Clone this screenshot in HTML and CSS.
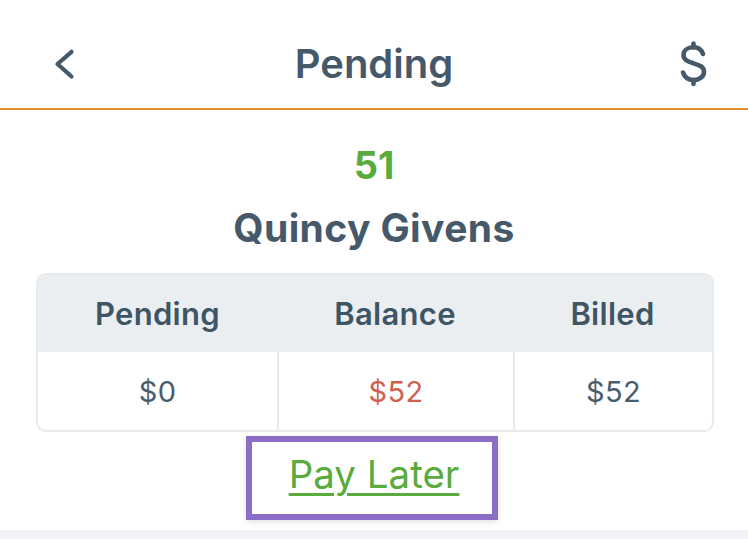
FILE: index.html
```html
<!DOCTYPE html>
<html lang="en">
<head>
<meta charset="utf-8">
<title>Pending</title>
<link rel="stylesheet" href="styles.css">
</head>
<body>
<header class="nav">
  <svg class="nav-back" width="24" height="34" viewBox="0 0 24 34" aria-hidden="true">
    <polyline points="19.5,4.8 5.5,17 19.5,29.5" fill="none" stroke="#45596a" stroke-width="4.2" stroke-linecap="round" stroke-linejoin="round"/>
  </svg>
  <h1 class="nav-title">Pending</h1>
  <svg class="nav-dollar" width="30" height="46" viewBox="0 0 30 46" aria-hidden="true">
    <g fill="none" stroke="#45596a" stroke-width="4.6" stroke-linecap="round" stroke-linejoin="round">
      <line x1="14.5" y1="2.5" x2="14.5" y2="6.3"/>
      <line x1="14.5" y1="39" x2="14.5" y2="43"/>
      <path d="M24 13 C22.5 8.5 18.5 6.3 14.5 6.3 C8.5 6.3 4.5 9.5 4.5 14 C4.5 19 9 20.5 14.5 22.3 C20 24 25 25.5 25 30.7 C25 35.5 20.5 39 14.5 39 C9.5 39 5.5 36 4 31.5"/>
    </g>
  </svg>
</header>
<main class="content">
  <div class="count">51</div>
  <div class="name">Quincy Givens</div>
  <div class="summary">
    <div class="cell head">Pending</div>
    <div class="cell head">Balance</div>
    <div class="cell head">Billed</div>
    <div class="cell value">$0</div>
    <div class="cell value sep negative">$52</div>
    <div class="cell value sep">$52</div>
  </div>
  <a class="pay-later" href="#">Pay Later</a>
</main>
<div class="bottom-strip"></div>
</body>
</html>
```
FILE: styles.css
```css
html, body {
  margin: 0;
  padding: 0;
  background: #ffffff;
  font-family: Inter, "Noto Sans", "Liberation Sans", sans-serif;
}

.nav {
  box-sizing: border-box;
  height: 110px;
  padding: 20px 39px 0 39px;
  display: grid;
  grid-template-columns: 1fr auto 1fr;
  align-items: center;
  border-bottom: 2px solid #e28f2e;
}

.nav-back {
  justify-self: start;
  margin-left: 13px;
  display: block;
}

.nav-dollar {
  justify-self: end;
  display: block;
}

.nav-title {
  margin: 0;
  font-size: 40px;
  line-height: 1;
  font-weight: 600;
  color: #45596a;
}

.content {
  display: flex;
  flex-direction: column;
  align-items: center;
}

.count {
  margin-top: 36px;
  font-size: 38px;
  line-height: 38px;
  font-weight: 700;
  color: #5aab3e;
}

.name {
  margin-top: 24px;
  font-size: 39px;
  line-height: 39px;
  font-weight: 700;
  color: #45596a;
  letter-spacing: 0.4px;
}

.summary {
  align-self: stretch;
  margin: 26px 34px 0 36px;
  border: 2px solid #e6eaeb;
  border-radius: 10px;
  overflow: hidden;
  display: grid;
  grid-template-columns: 239px 236px 1fr;
  grid-template-rows: 77px 78px;
}

.cell {
  box-sizing: border-box;
  display: flex;
  align-items: center;
  justify-content: center;
}

.head {
  background: #ebeef0;
  font-size: 31px;
  font-weight: 600;
  color: #3e5566;
  letter-spacing: 0.3px;
}

.value {
  background: #ffffff;
  font-size: 29px;
  font-weight: 400;
  color: #4a5d6b;
  letter-spacing: 0.3px;
}

.sep {
  border-left: 2px solid #e6eaeb;
}

.negative {
  color: #d0604e;
}

.pay-later {
  align-self: flex-start;
  box-sizing: border-box;
  margin: 4px 0 0 246px;
  width: 252px;
  height: 84px;
  border: 6px solid #8b6cc6;
  box-shadow: 0 2px 6px rgba(0, 0, 0, 0.12);
  padding: 0 0 7px 4px;
  text-align: center;
  font-size: 38.5px;
  line-height: 65px;
  font-weight: 400;
  color: #5aab3e;
  text-decoration: underline;
  text-decoration-thickness: 2.5px;
  text-underline-offset: 5px;
}

.bottom-strip {
  margin-top: 10px;
  height: 20px;
  background: #f2f2f7;
}
```
